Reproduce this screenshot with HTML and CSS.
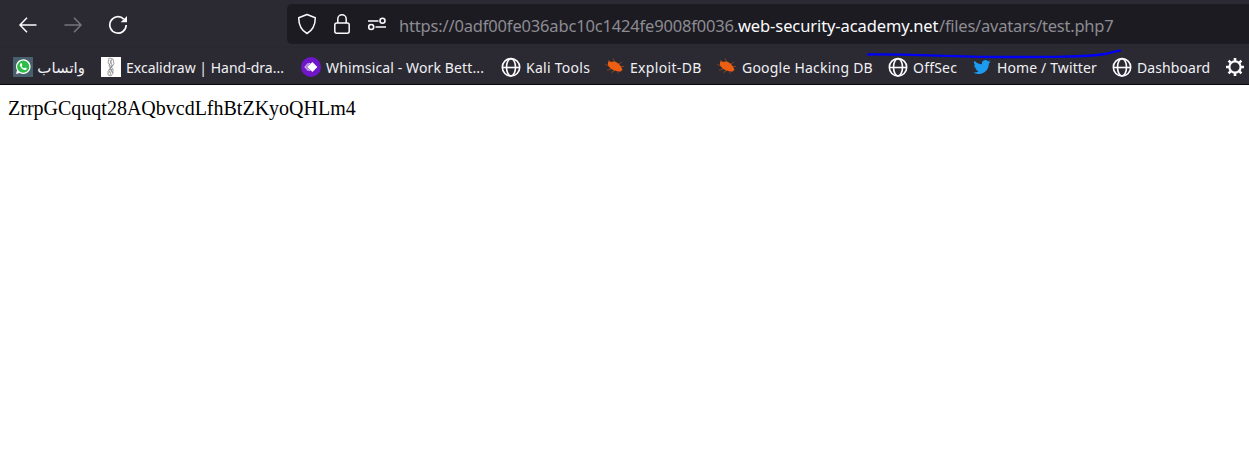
FILE: index.html
```html
<!DOCTYPE html>
<html lang="en">
<head>
<meta charset="utf-8">
<title>test.php7</title>
<link rel="stylesheet" href="styles.css">
</head>
<body>
<svg class="defs" width="0" height="0">
  <symbol id="globe" viewBox="0 0 20 20"><g fill="none" stroke="#fbfbfe" stroke-width="1.600"><circle cx="10" cy="10.300" r="8.700"/><ellipse cx="10" cy="10.300" rx="4.500" ry="8.700"/><path d="M1.500 10.500h17"/></g></symbol>
  <symbol id="splat" viewBox="0 0 20 20"><path d="M.5 7.500l6 2M2 13.500l5-2M8 1.500l2 4M3 3l3 3M6 15.500l4-2M17 5l-4 3M19 9.500h-4M13 16.500l-1-3" stroke="#8a4327" stroke-width=".9"/><path d="M3 4.500l4 .3 3-.3 3.500 2 2.500 3 1.500 3.500-2.500 1.800-3-.8-3-.5-3.500-2-2.500-3z" fill="#ec5e10"/></symbol>
</svg>
<header class="chrome">
  <div class="toolbar">
    <nav class="nav">
      <svg width="20" height="20" viewBox="0 0 20 20"><path d="M18.500 10H2.200M9 2.800L2 10l7 7.200" fill="none" stroke="#fbfbfe" stroke-width="1.500"/></svg>
      <svg width="20" height="20" viewBox="0 0 20 20"><path d="M1.500 10h16.300M11 2.800l7 7.200-7 7.200" fill="none" stroke="#76757c" stroke-width="1.500"/></svg>
      <svg width="20" height="20" viewBox="0 0 20 20"><path d="M15.800 4.100A8.200 8.200 0 1 0 18.200 10" fill="none" stroke="#fbfbfe" stroke-width="1.700"/><path d="M19 1v6.300h-6.300z" fill="#fbfbfe"/></svg>
    </nav>
    <div class="urlbar">
      <svg width="20" height="22" viewBox="0 0 20 22"><path d="M10 1.500L18.300 4.700C18.300 12 16 17 10 20.500 4 17 1.700 12 1.700 4.700z" fill="none" stroke="#fbfbfe" stroke-width="1.500" stroke-linejoin="round"/></svg>
      <svg class="lock" width="18" height="22" viewBox="0 0 18 22"><g fill="none" stroke="#fbfbfe" stroke-width="1.500"><rect x="1.800" y="10" width="14.400" height="10.200" rx="2"/><path d="M4.800 10V6a4.200 4.200 0 0 1 8.400 0v4"/></g></svg>
      <svg class="perm" width="20" height="14" viewBox="0 0 20 14"><g fill="none" stroke="#fbfbfe" stroke-width="1.600"><path d="M1 4h10.500M8.500 10H19"/><circle cx="15.500" cy="3.800" r="2.500"/><circle cx="4.200" cy="10" r="2.500"/></g></svg>
      <div class="url"><span class="sub">https://0adf00fe036abc10c1424fe9008f0036.</span><span class="domain">web-security-academy.net</span><span class="path">/files/avatars/test.php7</span></div>
    </div>
  </div>
  <div class="bookmarks">
    <div class="bm arabic"><svg viewBox="0 0 20 20"><path fill="#47606c" d="M0 0h20v20H0z"/><path d="M3 17l1-3.700A7.300 7.300 0 1 1 6.800 16z" fill="#fff"/><circle cx="10.200" cy="9.700" r="6.100" fill="#2dbd49"/><path d="M7.600 6.200c-1.500 1.500-.5 3.500 1 5 1.700 1.700 3.500 2.500 4.800 1.200.5-.6.400-1-.2-1.400l-1.100-.6-.9.900c-1.200-.4-2.100-1.300-2.500-2.400l.7-.8-.7-1.700c-.3-.5-.7-.5-1.100-.2z" fill="#fff"/></svg><span lang="ar" dir="rtl">واتساب</span></div>
    <div class="bm excal"><svg viewBox="0 0 20 20"><path fill="#fff" d="M0 0h20v20H0z"/><path d="M8 1l4 1 1 5-6 7 0 4 3 1 2-3 0-4-5-6zM9 3l2 5-3 8M11 2L8 9l4 7M8 13l4-5M9 18l2-6" fill="none" stroke="#888" stroke-width=".8"/></svg><span>Excalidraw | Hand-dra...</span></div>
    <div class="bm whim"><svg viewBox="0 0 20 20"><circle cx="10" cy="10" r="10" fill="#7016c9"/><path d="M7.500 6L3.800 10l3.700 4M9.200 6l-3.700 4 3.700 4" fill="none" stroke="#ead8fa" stroke-width="1"/><path d="M11.400 5l5 5-5 5-5-5z" fill="#fff"/></svg><span>Whimsical - Work Bett...</span></div>
    <div class="bm kali"><svg><use href="#globe"/></svg><span>Kali Tools</span></div>
    <div class="bm exploit"><svg><use href="#splat"/></svg><span>Exploit-DB</span></div>
    <div class="bm google"><svg><use href="#splat"/></svg><span>Google Hacking DB</span></div>
    <div class="bm offsec"><svg><use href="#globe"/></svg><span>OffSec</span></div>
    <div class="bm twitter"><svg viewBox="-2 -2 28 28"><path fill="#1d9bf0" d="M23.950 4.570a10 10 0 0 1-2.820.770 4.960 4.960 0 0 0 2.160-2.720c-.95.550-2 .950-3.130 1.180a4.920 4.920 0 0 0-8.380 4.480C7.690 8.090 4.070 6.130 1.640 3.160a4.900 4.900 0 0 0 1.520 6.570 4.900 4.900 0 0 1-2.230-.610v.060a4.920 4.920 0 0 0 3.950 4.830 5 5 0 0 1-2.210.080 4.940 4.940 0 0 0 4.600 3.420A9.870 9.870 0 0 1 0 19.540a14 14 0 0 0 7.550 2.210c9.050 0 14-7.500 14-13.980v-.640a10 10 0 0 0 2.400-2.560z"/></svg><span>Home / Twitter</span></div>
    <div class="bm dash"><svg><use href="#globe"/></svg><span>Dashboard</span></div>
    <div class="bm"><svg viewBox="0 0 20 20"><g fill="none" stroke="#fbfbfe"><circle cx="10" cy="10" r="5.600" stroke-width="2.200"/><path d="M10 1v3M10 16v3M1 10h3M16 10h3M3.600 3.600l2.200 2.200M14.200 14.200l2.200 2.200M3.600 16.400l2.200-2.200M14.200 5.800l2.200-2.200" stroke-width="2.600"/></g></svg></div>
  </div>
  <svg class="marker" width="260" height="14" viewBox="0 0 260 14"><path d="M3 6.500C50 6 85 9 135 9S220 9 240 6c6-1 10-2.500 15-3.300" fill="none" stroke="#0000f5" stroke-width="2.300" stroke-linecap="round"/></svg>
</header>
<main class="page">ZrrpGCquqt28AQbvcdLfhBtZKyoQHLm4</main>
</body>
</html>
```
FILE: styles.css
```css
body { margin: 0; background: #fff; overflow: hidden; }
.defs { position: absolute; }
.chrome { position: relative; height: 84px; background: #2b2a33; border-bottom: 1px solid #08080a; color: #fbfbfe; font-family: "Noto Sans", "Open Sans", sans-serif; overflow: hidden; }
.toolbar { display: flex; height: 48px; padding-top: 4px; box-sizing: border-box; border-bottom: 1px solid #29282f; }
.nav { display: flex; align-items: center; gap: 25px; width: 269px; height: 42px; padding-left: 18px; flex: none; }
.urlbar { display: flex; align-items: center; flex: 1; height: 40px; padding-left: 10px; background: #1c1b22; border-radius: 5px 0 0 5px; }
.urlbar svg { flex: none; }
.lock { margin-left: 16px; }
.perm { margin-left: 16px; }
.url { display: flex; margin-left: 12px; padding-top: 4px; font-size: 16.5px; line-height: 24px; white-space: nowrap; color: #8d8c92; }
.sub { width: 339px; letter-spacing: -0.17px; }
.domain { width: 201px; color: #fbfbfe; letter-spacing: -0.1px; }
.path { width: 174px; letter-spacing: -0.24px; }
.bookmarks { display: flex; gap: 16px; height: 38px; padding-left: 13px; align-items: center; font-size: 14px; white-space: nowrap; }
.bm { display: flex; align-items: center; gap: 5px; flex: none; }
.bm svg { width: 20px; height: 20px; flex: none; }
.bm span { line-height: 18px; padding-top: 2px; color: #f0f0f4; }
.arabic span { width: 47px; font-family: "DejaVu Sans", sans-serif; font-size: 15px; }
.excal span { width: 159px; }
.whim span { width: 159px; letter-spacing: 0.12px; }
.kali span { width: 63px; letter-spacing: 0.27px; }
.exploit span { width: 71px; letter-spacing: 0.33px; }
.google span { width: 130px; letter-spacing: 0.22px; }
.offsec span { width: 43px; letter-spacing: 0.2px; }
.twitter span { width: 99px; letter-spacing: 0.12px; }
.dash span { width: 72px; letter-spacing: 0.08px; }
.marker { position: absolute; left: 865px; top: 48px; }
.page { padding: 12px 8px; font: 20px/23px "Liberation Serif", "Times New Roman", serif; color: #000; }
```
